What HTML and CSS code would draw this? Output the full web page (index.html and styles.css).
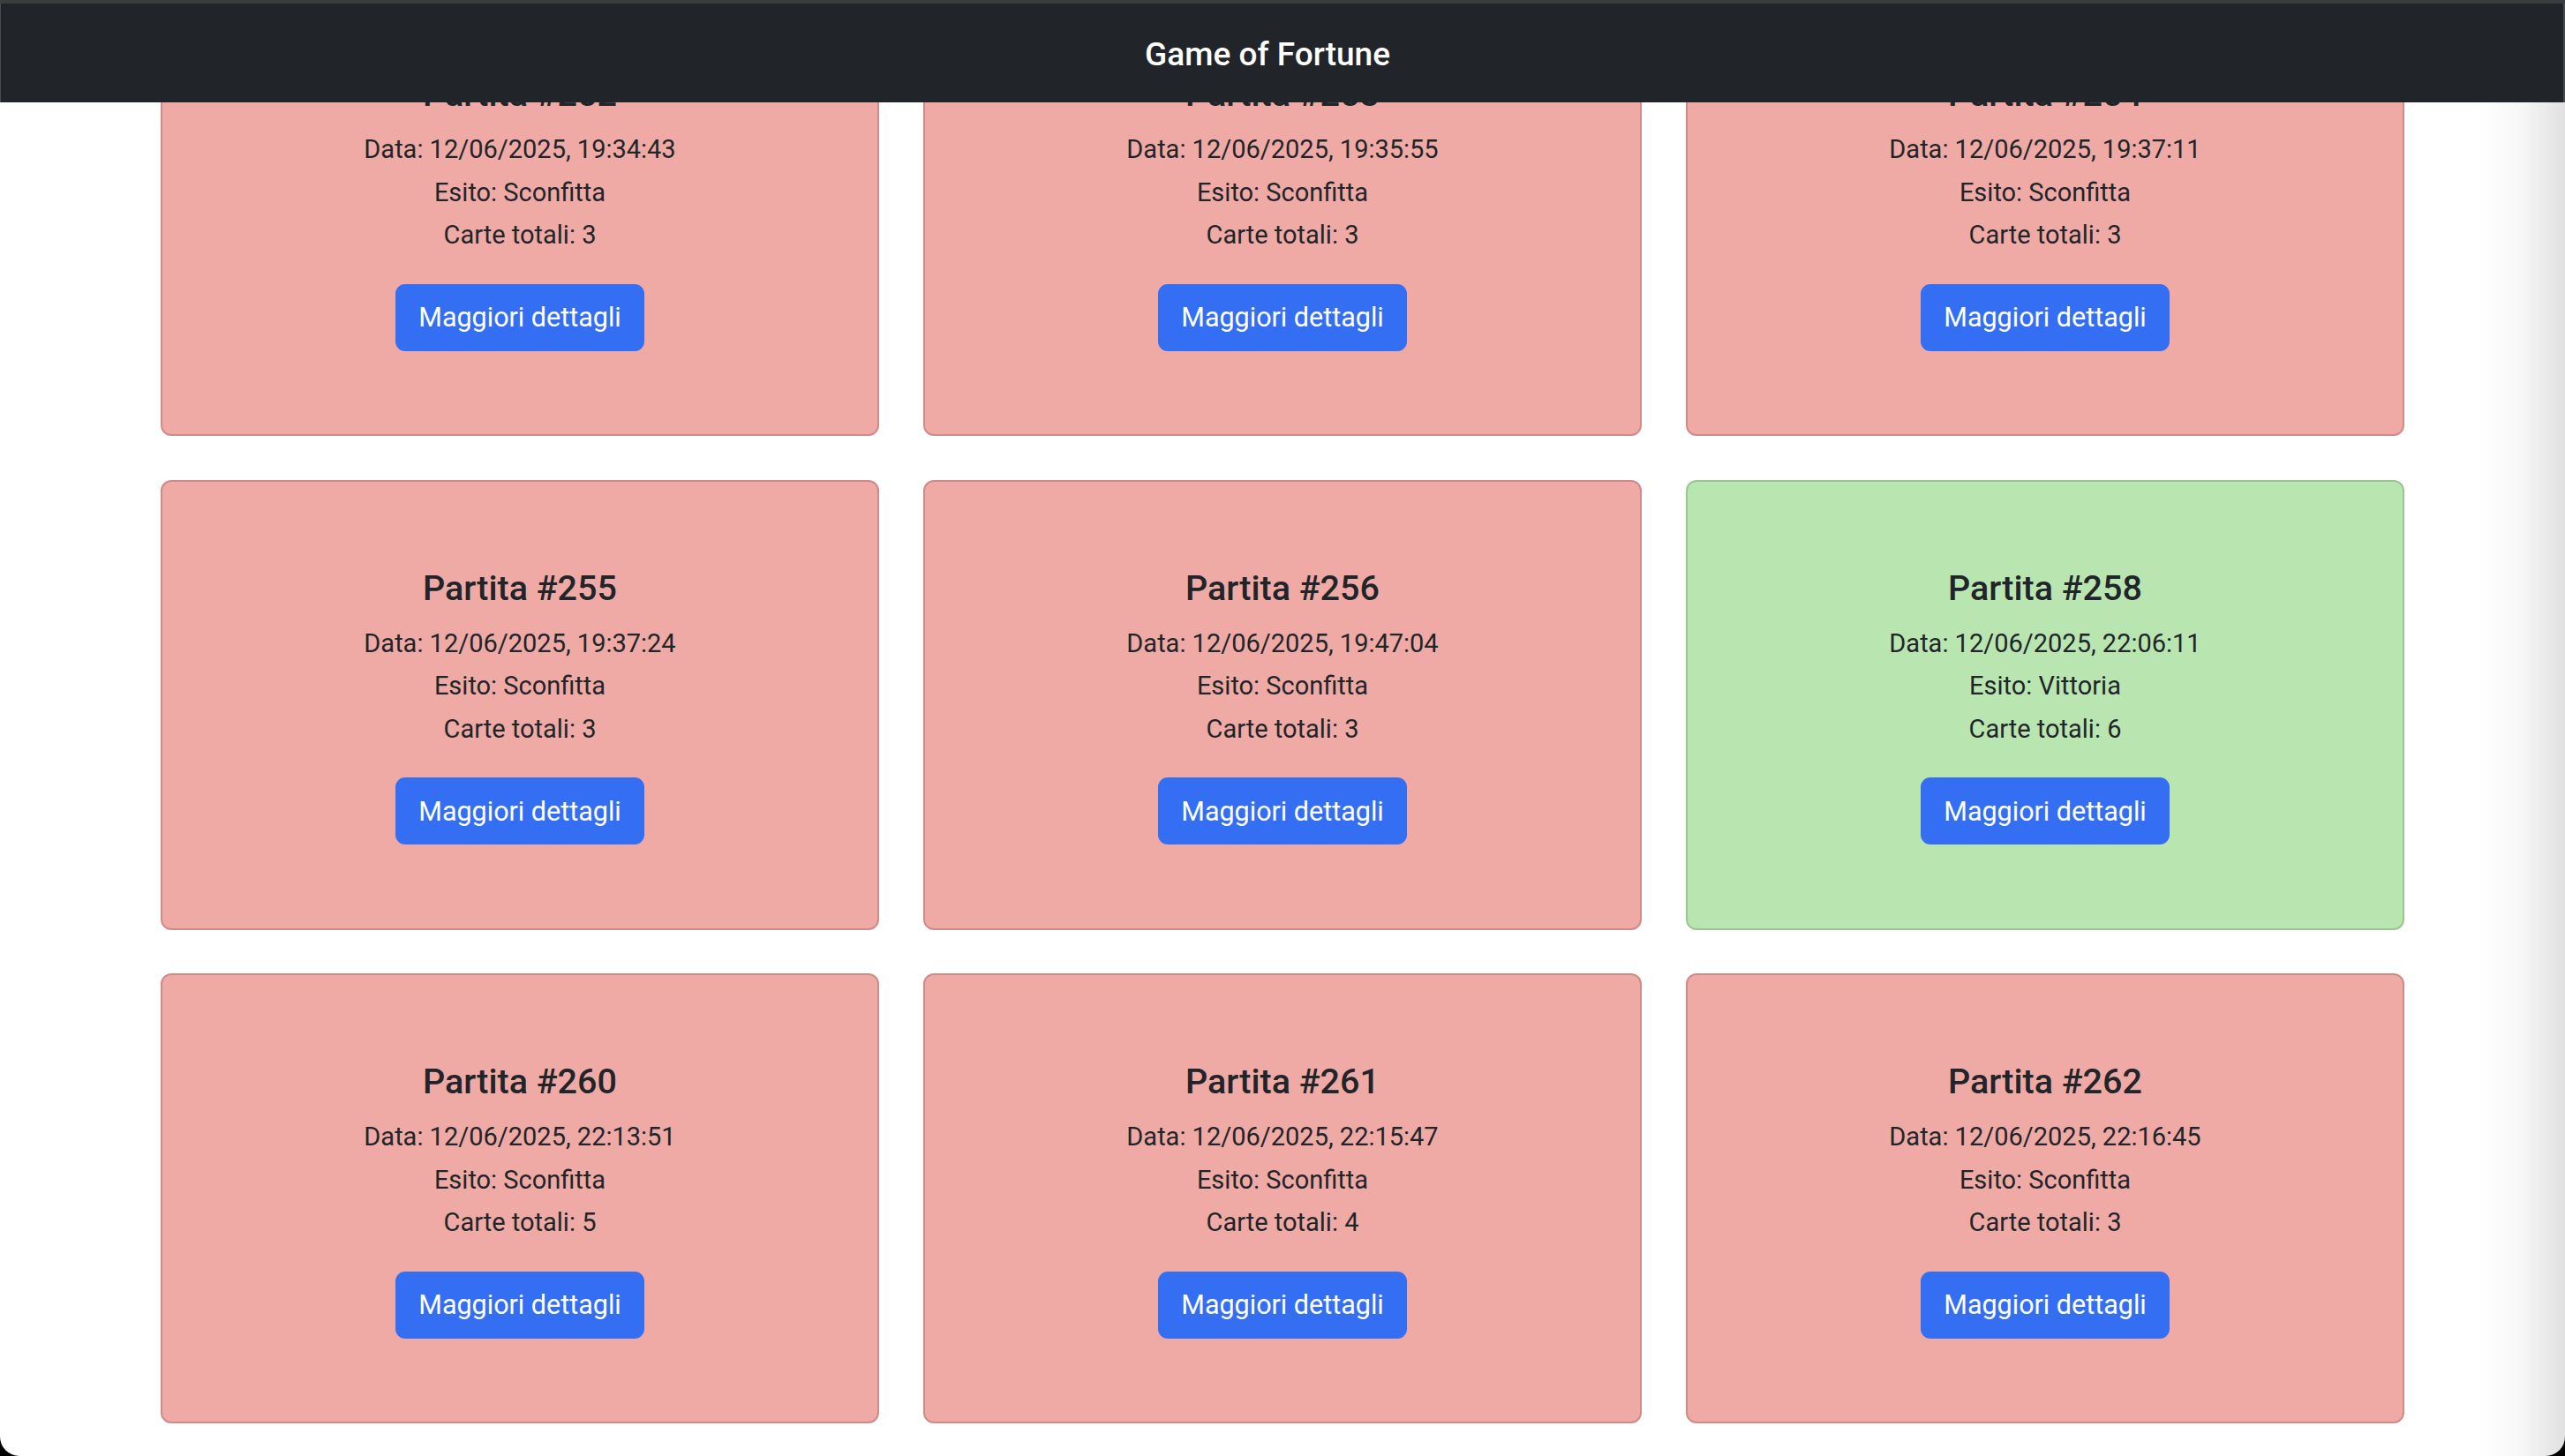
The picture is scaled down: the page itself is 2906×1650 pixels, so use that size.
FILE: index.html
```html
<!DOCTYPE html>
<html lang="it">
<head>
<meta charset="utf-8">
<title>Game of Fortune</title>
<link rel="stylesheet" href="styles.css">
</head>
<body>
<div class="window">
  <header class="navbar"><span class="brand">Game of Fortune</span></header>
  <main class="grid">
    <div class="card loss"><h5>Partita #252</h5><p>Data: 12/06/2025, 19:34:43</p><p>Esito: Sconfitta</p><p>Carte totali: 3</p><a class="btn">Maggiori dettagli</a></div>
    <div class="card loss"><h5>Partita #253</h5><p>Data: 12/06/2025, 19:35:55</p><p>Esito: Sconfitta</p><p>Carte totali: 3</p><a class="btn">Maggiori dettagli</a></div>
    <div class="card loss"><h5>Partita #254</h5><p>Data: 12/06/2025, 19:37:11</p><p>Esito: Sconfitta</p><p>Carte totali: 3</p><a class="btn">Maggiori dettagli</a></div>
    <div class="card loss"><h5>Partita #255</h5><p>Data: 12/06/2025, 19:37:24</p><p>Esito: Sconfitta</p><p>Carte totali: 3</p><a class="btn">Maggiori dettagli</a></div>
    <div class="card loss"><h5>Partita #256</h5><p>Data: 12/06/2025, 19:47:04</p><p>Esito: Sconfitta</p><p>Carte totali: 3</p><a class="btn">Maggiori dettagli</a></div>
    <div class="card win"><h5>Partita #258</h5><p>Data: 12/06/2025, 22:06:11</p><p>Esito: Vittoria</p><p>Carte totali: 6</p><a class="btn">Maggiori dettagli</a></div>
    <div class="card loss"><h5>Partita #260</h5><p>Data: 12/06/2025, 22:13:51</p><p>Esito: Sconfitta</p><p>Carte totali: 5</p><a class="btn">Maggiori dettagli</a></div>
    <div class="card loss"><h5>Partita #261</h5><p>Data: 12/06/2025, 22:15:47</p><p>Esito: Sconfitta</p><p>Carte totali: 4</p><a class="btn">Maggiori dettagli</a></div>
    <div class="card loss"><h5>Partita #262</h5><p>Data: 12/06/2025, 22:16:45</p><p>Esito: Sconfitta</p><p>Carte totali: 3</p><a class="btn">Maggiori dettagli</a></div>
  </main>
  <div class="scroll-shade"></div>
</div>
</body>
</html>
```
FILE: styles.css
```css
html {
  background: #000;
}
body {
  margin: 0;
  font-family: Roboto, "Noto Sans", sans-serif;
  color: #212529;
}
.window {
  position: relative;
  height: 1650px;
  overflow: hidden;
  background: #fff;
  border-radius: 0 0 22px 22px;
}
.navbar {
  position: absolute;
  top: 0;
  left: 0;
  right: 0;
  z-index: 5;
  box-sizing: border-box;
  height: 116px;
  border-top: 4px solid #3c3d3f;
  background: #212529;
  display: flex;
  align-items: center;
  justify-content: center;
  padding: 3px 34px 0 0;
  box-shadow: inset 1px 0 0 #4a4b4d, inset -2px 0 0 #4a4b4d;
}
.brand {
  color: #fff;
  font-size: 37px;
  font-weight: 500;
}
.grid {
  width: 2542px;
  margin: -16px auto 0;
  display: grid;
  grid-template-columns: repeat(3, 1fr);
  column-gap: 50px;
  row-gap: 49.5px;
}
.card {
  box-sizing: border-box;
  height: 510px;
  border: 2px solid #cf8b87;
  border-radius: 12px;
  background: #f0aaa5;
  padding: 97px 20px 0;
  display: flex;
  flex-direction: column;
  align-items: center;
  text-align: center;
}
.card.win {
  background: #b9e6b0;
  border-color: #98c78f;
}
.card h5 {
  margin: 0 0 14px;
  font-size: 39.5px;
  line-height: 48px;
  font-weight: 500;
}
.card p {
  margin: 0;
  font-size: 29px;
  line-height: 48.5px;
}
.btn {
  margin-top: 31px;
  box-sizing: border-box;
  height: 76px;
  width: 282px;
  display: flex;
  align-items: center;
  justify-content: center;
  background: #346ef2;
  color: #fff;
  border-radius: 11px;
  font-size: 30.5px;
}
.scroll-shade {
  position: absolute;
  top: 116px;
  right: 0;
  bottom: 0;
  width: 100px;
  background: linear-gradient(to right, rgba(0,0,0,0), rgba(0,0,0,0.03) 50%, rgba(0,0,0,0.12));
  pointer-events: none;
}
```
